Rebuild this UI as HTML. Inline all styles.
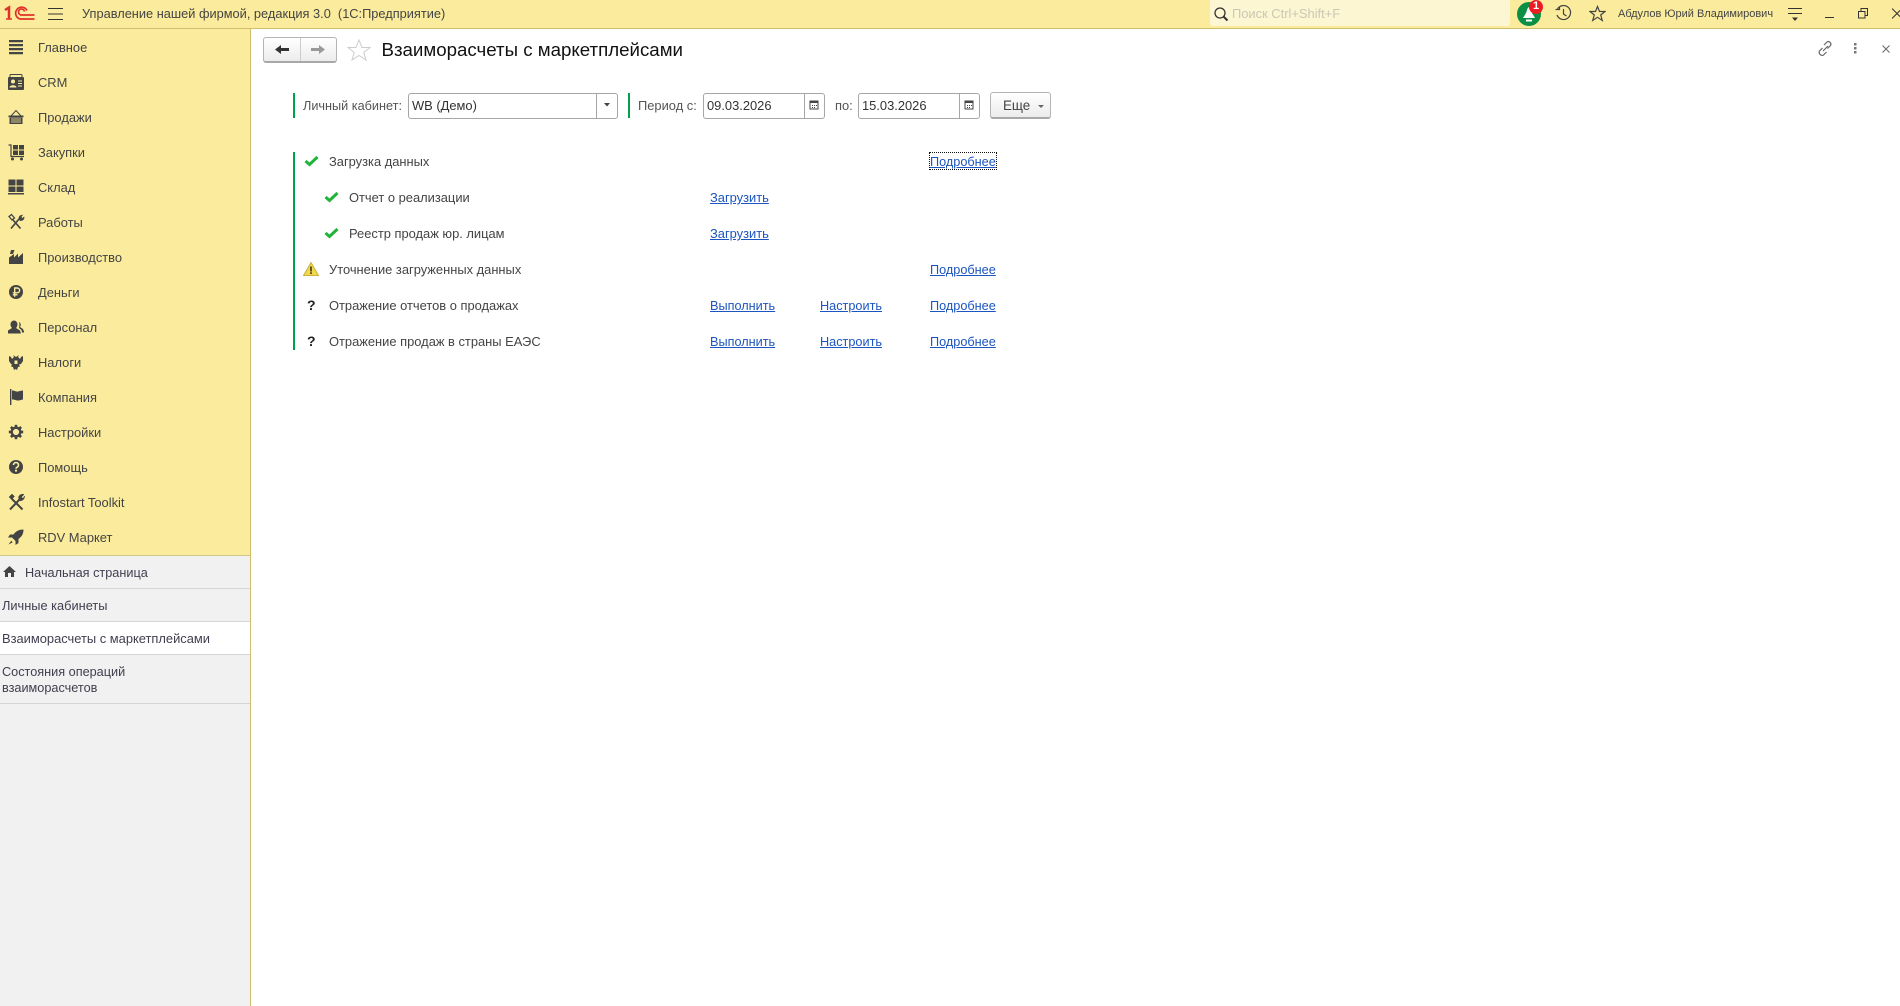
<!DOCTYPE html>
<html lang="ru"><head><meta charset="utf-8"><title>Взаиморасчеты с маркетплейсами</title>
<style>
html,body{margin:0;padding:0;width:1900px;height:1006px;overflow:hidden;background:#fff}
body{font:12.9px/14px "Liberation Sans",Arial,sans-serif;color:#333;position:relative}
div,a,span,svg{position:absolute;white-space:nowrap}
a{color:#1c55c0;text-decoration:underline;font-size:12.7px}
.m{left:38px;color:#444;height:14px;margin-top:-6px}
.i{left:6px;width:20px;height:20px;margin-top:-10px}
.t{left:329px;margin-top:-6px;color:#444}
.l{margin-top:-6px}
.x{left:304px;width:15px;height:12px;margin-top:-6px}
.inp{border:1px solid #a6a6a6;border-radius:3px;height:24px;top:93px;background:#fff;box-sizing:content-box}
.v{left:3px;top:5px;color:#333}
.d{top:0;width:1px;height:24px;background:#a6a6a6}
.g{background:#00a14b;width:2px}
.s{font-size:12.7px;color:#3f3f4f}
</style></head><body>
<div style="left:0;top:0;width:1900px;height:28px;background:#fbec9d"></div>
<div style="left:0;top:28px;width:1900px;height:1px;background:#d0bf6a"></div>
<div style="left:0;top:29px;width:250px;height:526px;background:#fbec9d"></div>
<div style="left:0;top:555px;width:250px;height:1px;background:#d0c68a"></div>
<div style="left:0;top:556px;width:250px;height:450px;background:#f1f1f1"></div>
<div style="left:250px;top:29px;width:1px;height:977px;background:#d0bf6a"></div>

<svg style="left:0;top:0" width="40" height="26" fill="none" stroke="#e0312a"><path d="M5 10l4-2.500V19" stroke-width="2.500"/><path d="M6 19h6" stroke-width="1.500"/><path d="M27 10.500A6 6 0 1 0 20 19h14.500" stroke-width="1.700"/><path d="M24.500 11.500A3 3 0 1 0 21 15h13.500" stroke-width="1.700"/></svg>
<svg style="left:48px;top:7px" width="15" height="14"><path d="M0 1.500h15M0 7h15M0 12.500h15" stroke="#333" stroke-width="1"/></svg>
<div style="left:82px;top:7px;color:#444;font-size:12.8px">Управление нашей фирмой, редакция 3.0&nbsp; (1С:Предприятие)</div>

<div style="left:1210px;top:0;width:300px;height:26px;background:#fdf6d2;border-radius:0 0 3px 3px"></div>
<svg style="left:1213px;top:6px" width="16" height="16" fill="none" stroke="#333"><circle cx="7" cy="7" r="5" stroke-width="1.300"/><path d="M10.500 10.500l4 4" stroke-width="2"/></svg>
<div style="left:1232px;top:7px;color:#c9c7b6">Поиск Ctrl+Shift+F</div>
<svg style="left:1517px;top:0" width="28" height="27"><circle cx="12" cy="14" r="12" fill="#0b8f45"/><path d="M12 7c-2 1-2 4-3 6l-3 5h12l-3-5c-1-2-1-5-3-6z" fill="#fff"/><path d="M9 20.500h6" stroke="#fff" stroke-width="2"/><circle cx="19" cy="7" r="7" fill="#ec1c24"/></svg>
<div style="left:1533px;top:-1px;color:#fff;font-weight:bold;font-size:11px">1</div>
<svg style="left:1555px;top:5px" width="17" height="17" fill="none" stroke="#444" stroke-width="1.200"><path d="M2.500 4A7 7 0 1 1 2 10"/><path d="M0.500 4.500h4v-3" /><path d="M8.500 4v5l3 2"/></svg>
<svg style="left:1589px;top:5px" width="17" height="17" fill="none" stroke="#444" stroke-width="1.200"><path d="M8.500 1.500l2 5h5.500l-4.300 3.500 1.600 5.500-4.800-3.200-4.800 3.200 1.600-5.500L1 6.500h5.500z"/></svg>
<div style="left:1618px;top:7px;color:#444;font-size:11px">Абдулов Юрий Владимирович</div>
<svg style="left:1788px;top:7px" width="15" height="15"><path d="M0 1.500h14M0 6.500h14" stroke="#333"/><path d="M4 10.500h6l-3 3.500z" fill="#333"/></svg>
<div style="left:1825px;top:17px;width:9px;height:1px;background:#333"></div>
<svg style="left:1858px;top:8px" width="11" height="11" fill="none" stroke="#333"><path d="M.5 3.500h6.500v6.500H.5zM3 3.500V.5h6.500v7H7"/></svg>
<svg style="left:1892px;top:8px" width="8" height="11" fill="none" stroke="#333"><path d="M0 .5l10 10M10 .5L0 10.500"/></svg>

<div class="m" style="top:47px">Главное</div><div class="m" style="top:82px">CRM</div><div class="m" style="top:117px">Продажи</div><div class="m" style="top:152px">Закупки</div><div class="m" style="top:187px">Склад</div><div class="m" style="top:222px">Работы</div><div class="m" style="top:257px">Производство</div><div class="m" style="top:292px">Деньги</div><div class="m" style="top:327px">Персонал</div><div class="m" style="top:362px">Налоги</div><div class="m" style="top:397px">Компания</div><div class="m" style="top:432px">Настройки</div><div class="m" style="top:467px">Помощь</div><div class="m" style="top:502px">Infostart Toolkit</div><div class="m" style="top:537px">RDV Маркет</div>

<svg class="i" style="top:47px" viewBox="0 0 20 20" fill="#444"><path d="M3 3h14v2.300H3zM3 7h14v2.300H3zM3 11h14v2.300H3zM3 15h14v2.300H3z"/></svg>
<svg class="i" style="top:82px" viewBox="0 0 20 20"><path d="M4 5V3.500C4 3 4.500 2.500 5 2.500h10c.5 0 1 .5 1 1V5" fill="none" stroke="#444"/><path d="M3 5h14a1 1 0 0 1 1 1v11a1 1 0 0 1-1 1H3a1 1 0 0 1-1-1V6a1 1 0 0 1 1-1z" fill="#444"/><circle cx="7" cy="9.500" r="2" fill="#fbec9d"/><path d="M3.500 15.500c0-3 7-3 7 0zM12 8.500h4v1h-4zM12 11h4v1h-4zM12 13.500h4v1h-4z" fill="#fbec9d"/></svg>
<svg class="i" style="top:117px" viewBox="0 0 20 20" fill="#444"><path d="M5 9L10 3.500 15 9" fill="none" stroke="#444"/><path d="M2.500 8.500h15v1.700h-15zM3.500 10.500h13V17h-13z"/><path d="M6 11v5M8 11v5M10 11v5M12 11v5M14 11v5" stroke="#fbec9d" stroke-width=".8"/></svg>
<svg class="i" style="top:152px" viewBox="0 0 20 20" fill="#444"><path d="M7 3h5v4.500H7zM13 3h5v4.500h-5zM7 8.500h5V13H7zM13 8.500h5V13h-5z"/><path d="M2.500 3H5v11.500h13" fill="none" stroke="#444" stroke-width="1.200"/><circle cx="6.500" cy="17" r="1.500"/><circle cx="15.500" cy="17" r="1.500"/></svg>
<svg class="i" style="top:187px" viewBox="0 0 20 20" fill="#444"><path d="M2.500 2.500h7v6h-7zM10.500 2.500h7v6h-7zM2.500 9.500h7V15h-7zM10.500 9.500h7V15h-7zM2 16h16v1.500H2z"/></svg>
<svg class="i" style="top:222px" viewBox="0 0 20 20" fill="none" stroke="#444" stroke-width="1.700"><path d="M5 16.500l8-9.500M7 8l7.500 8.500"/><path d="M13 7c-.5-2 1-4 3.500-4l-1.500 2 1.500 1.500 1.500-1.500c.5 2.500-2 4-4 3.500z" fill="#444" stroke-width=".6"/><path d="M3 4.500L5.500 2.500l3 3.500-2.500 2z" fill="none" stroke-width="1.300"/></svg>
<svg class="i" style="top:257px" viewBox="0 0 20 20" fill="#444"><path d="M3 17v-6.500l5-3.500v3.500l4-4v4l5-4.500v11zM5 3h3.500L7 7H4z"/></svg>
<svg class="i" style="top:292px" viewBox="0 0 20 20"><circle cx="10" cy="10" r="7" fill="#444"/><path d="M8.700 14.800V6h2.500a2.300 2.300 0 0 1 0 4.800H6.800M6.800 12.800h4.700" stroke="#fbec9d" stroke-width="1.400" fill="none"/></svg>
<svg class="i" style="top:327px" viewBox="0 0 20 20" fill="#444"><path d="M8 3.500a3.500 4 0 0 1 3.500 4c0 1.500-.7 2.700-1.500 3.500l4 2.500 1 3H2v-3l4-2.500C5.200 10.200 4.500 9 4.500 7.500A3.500 4 0 0 1 8 3.500z"/><path d="M13 5a2.500 3 0 0 1 1 5l3 2 1 2.500v1h-2l-.5-2.500-2.500-2c.5-2 .5-4 0-6z"/></svg>
<svg class="i" style="top:362px" viewBox="0 0 20 20" fill="#444"><path d="M3 4l2 1 1 2 2-2-1-2 3 2 3-2-1 2 2 2 1-2 2-1v5l-2 3-2 .5 1 2-2 .5-1 3-1.500-1-1.500 1-1-3-2-.5 1-2L5 12 3 9z"/><path d="M8.500 8.500h3v3.500h-3z" fill="#fbec9d"/></svg>
<svg class="i" style="top:397px" viewBox="0 0 20 20" fill="#444"><path d="M4 2h1.400v16H4zM6 3.500c3 0 4 1.500 6 1s3-1 5-1v9c-2 .3-3 1-5 1s-3-1-6-1z"/></svg>
<svg class="i" style="top:432px" viewBox="0 0 20 20"><circle cx="10" cy="10" r="4.300" fill="none" stroke="#444" stroke-width="2.400"/><g fill="#444"><path d="M8.700 2.800h2.600v3H8.700z"/><path d="M8.700 14.200h2.600v3H8.700z"/><path d="M2.800 8.700h3v2.600h-3z"/><path d="M14.200 8.700h3v2.600h-3z"/><path d="M8.700 2.800h2.600v3H8.700z" transform="rotate(45 10 10)"/><path d="M8.700 14.200h2.600v3H8.700z" transform="rotate(45 10 10)"/><path d="M2.800 8.700h3v2.600h-3z" transform="rotate(45 10 10)"/><path d="M14.200 8.700h3v2.600h-3z" transform="rotate(45 10 10)"/></g></svg>
<svg class="i" style="top:467px" viewBox="0 0 20 20"><circle cx="10" cy="10" r="7" fill="#444"/><path d="M7.500 8a2.500 2.500 0 1 1 3.500 2.300c-.8.400-1 .8-1 1.500" stroke="#fbec9d" stroke-width="1.600" fill="none"/><path d="M9 12.700h2v1.900H9z" fill="#fbec9d"/></svg>
<svg class="i" style="top:502px" viewBox="0 0 20 20" fill="#444" stroke="#444"><path d="M4 17.500L14 7M6 7l10.500 10.500" stroke-width="2" fill="none"/><path d="M3 5l3-3 2.500 2.500-3 3zM12.500 6c0-3 3-4.500 5.500-3.500L15.500 5 17 6.500 18.500 4c.5 3-2.500 5.500-5 4.500z" stroke-width=".5"/></svg>
<svg class="i" style="top:537px" viewBox="0 0 20 20" fill="#444"><path d="M17.500 2.500c-4.500 0-7.500 1.500-10 5H4l-2 3h4l3.500 3.500v4l3-2v-4c3.500-2.500 5-5.500 5-9.500z"/><path d="M5.500 13.500l-3 4 4-2z"/></svg>

<div style="left:0;top:588px;width:250px;height:1px;background:#d4d4d4"></div>
<div style="left:0;top:621px;width:250px;height:1px;background:#d4d4d4"></div>
<div style="left:0;top:622px;width:250px;height:32px;background:#fff"></div>
<div style="left:0;top:654px;width:250px;height:1px;background:#d4d4d4"></div>
<div style="left:0;top:703px;width:250px;height:1px;background:#d4d4d4"></div>
<svg style="left:3px;top:565px" width="13" height="13" fill="#444"><path d="M6.500 1L0 7h2v5h3V8h3v4h3V7h2z"/></svg>
<div class="s" style="left:25px;top:566px">Начальная страница</div>
<div class="s" style="left:2px;top:599px;font-size:12.8px">Личные кабинеты</div>
<div class="s" style="left:2px;top:632px;font-size:12.9px">Взаиморасчеты с маркетплейсами</div>
<div class="s" style="left:2px;top:664px;line-height:16px">Состояния операций<br>взаиморасчетов</div>

<div style="left:263px;top:37px;width:72px;height:23px;border:1px solid #b5b5b5;border-bottom:2px solid #a8a8a8;border-radius:3px;background:linear-gradient(#fff,#ececec)"></div>
<div style="left:300px;top:38px;width:1px;height:23px;background:#ccc"></div>
<svg style="left:275px;top:43px" width="15" height="13" fill="#333"><path d="M0 6.500L6 2v3h8v3H6v3z"/></svg>
<svg style="left:310px;top:43px" width="15" height="13" fill="#999"><path d="M15 6.500L9 2v3H1v3h8v3z"/></svg>
<svg style="left:347px;top:38px" width="24" height="24" fill="none" stroke="#ccc"><path d="M12 2l3 7.500h8l-6.300 5 2.300 7.500-7-4.500L5 22l2.300-7.500L1 9.500h8z"/></svg>
<div style="left:381.500px;top:39px;font-size:18.7px;line-height:22px;color:#111">Взаиморасчеты с маркетплейсами</div>
<svg style="left:1817px;top:40px" width="17" height="17" fill="none" stroke="#666" stroke-width="1.200"><path d="M7 5l3-3c1.500-1.500 5 1 3.500 3.500l-3 3M9.500 12l-3 3C5 16.500 1 14 2.500 11l3-3M6 11l5-5"/></svg>
<svg style="left:1854px;top:43px" width="4" height="12" fill="#777"><path d="M0 0h2.500v2.500H0zM0 4h2.500v2.500H0zM0 8h2.500v2.500H0z"/></svg>
<svg style="left:1882px;top:45px" width="8" height="8" fill="none" stroke="#666"><path d="M.5.500l7 7M7.500.5l-7 7"/></svg>

<div class="g" style="left:293px;top:93px;height:25px"></div>
<div style="left:303px;top:99px;color:#555;font-size:12.7px">Личный кабинет:</div>
<div class="inp" style="left:408px;width:208px"><span class="v">WB (Демо)</span><span class="d" style="left:187px"></span></div>
<svg style="left:604px;top:103px" width="6" height="4" fill="#444"><path d="M0 0h6L3 3.500z"/></svg>
<div class="g" style="left:628px;top:93px;height:25px"></div>
<div style="left:638px;top:99px;color:#555">Период с:</div>
<div class="inp" style="left:703px;width:120px"><span class="v">09.03.2026</span><span class="d" style="left:100px"></span></div>
<div style="left:835px;top:99px;color:#555">по:</div>
<div class="inp" style="left:858px;width:120px"><span class="v">15.03.2026</span><span class="d" style="left:100px"></span></div>
<svg style="left:809px;top:99px" width="10" height="11"><path d="M1 2h8v8H1z" fill="none" stroke="#444"/><path d="M1 1.500h8V4H1zM3 6h1v1H3zM5 6h1v1H5zM7 6h1v1H7zM3 8h1v1H3zM5 8h1v1H5z" fill="#444"/></svg>
<svg style="left:964px;top:99px" width="10" height="11"><path d="M1 2h8v8H1z" fill="none" stroke="#444"/><path d="M1 1.500h8V4H1zM3 6h1v1H3zM5 6h1v1H5zM7 6h1v1H7zM3 8h1v1H3zM5 8h1v1H5z" fill="#444"/></svg>
<div style="left:990px;top:92px;width:59px;height:24px;border:1px solid #b5b5b5;border-bottom:2px solid #a8a8a8;border-radius:3px;background:linear-gradient(#fff,#ececec)"></div>
<div style="left:1003px;top:99px;color:#444;font-size:13.4px">Еще</div>
<svg style="left:1038px;top:105px" width="6" height="3" fill="#666"><path d="M0 0h6L3 3z"/></svg>

<div class="g" style="left:293px;top:152px;height:198px"></div>
<svg class="x" style="top:161px" viewBox="0 0 15 12" fill="none" stroke="#22b33a" stroke-width="3"><path d="M1.500 6l4 3.500L13.500 2"/></svg>
<svg class="x" style="top:197px;left:324px" viewBox="0 0 15 12" fill="none" stroke="#22b33a" stroke-width="3"><path d="M1.500 6l4 3.500L13.500 2"/></svg>
<svg class="x" style="top:233px;left:324px" viewBox="0 0 15 12" fill="none" stroke="#22b33a" stroke-width="3"><path d="M1.500 6l4 3.500L13.500 2"/></svg>
<svg style="left:303px;top:262px" width="16" height="14"><path d="M8 .5L15.500 13.500H.5z" fill="#f4d84a" stroke="#c9b13a"/><path d="M7.200 4.500h1.600v5H7.200zM7.200 10.300h1.600v1.700H7.200z" fill="#333"/></svg>
<div style="left:307px;top:298px;font-weight:bold;font-size:14px;color:#222">?</div>
<div style="left:307px;top:334px;font-weight:bold;font-size:14px;color:#222">?</div>

<div class="t" style="top:161px">Загрузка данных</div>
<div class="t" style="top:197px;left:349px">Отчет о реализации</div>
<div class="t" style="top:233px;left:349px">Реестр продаж юр. лицам</div>
<div class="t" style="top:269px">Уточнение загруженных данных</div>
<div class="t" style="top:305px">Отражение отчетов о продажах</div>
<div class="t" style="top:341px">Отражение продаж в страны ЕАЭС</div>

<a class="l" style="left:930px;top:161px">Подробнее</a>
<div style="left:929px;top:152px;width:66px;height:16px;border:1px dotted #111"></div>
<a class="l" style="left:710px;top:197px;font-size:12.9px">Загрузить</a>
<a class="l" style="left:710px;top:233px;font-size:12.9px">Загрузить</a>
<a class="l" style="left:930px;top:269px">Подробнее</a>
<a class="l" style="left:710px;top:305px">Выполнить</a>
<a class="l" style="left:820px;top:305px">Настроить</a>
<a class="l" style="left:930px;top:305px">Подробнее</a>
<a class="l" style="left:710px;top:341px">Выполнить</a>
<a class="l" style="left:820px;top:341px">Настроить</a>
<a class="l" style="left:930px;top:341px">Подробнее</a>
</body></html>
